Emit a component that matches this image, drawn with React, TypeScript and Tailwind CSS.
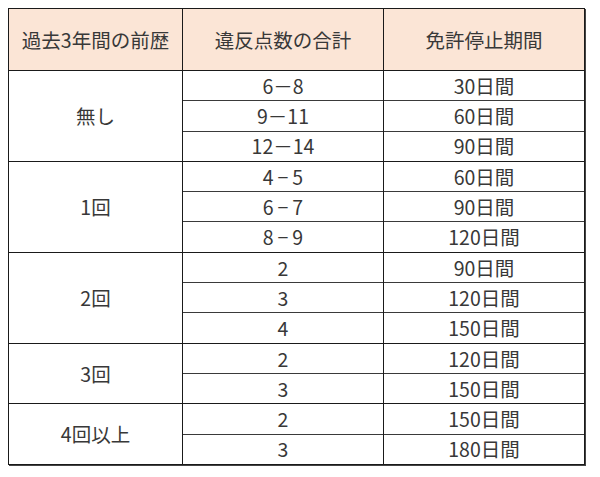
const groups: { label: string; rows: [string, string][] }[] = [
  { label: "無し", rows: [["6－8", "30日間"], ["9－11", "60日間"], ["12－14", "90日間"]] },
  { label: "1回", rows: [["4\u2009−\u20095", "60日間"], ["6\u2009−\u20097", "90日間"], ["8\u2009−\u20099", "120日間"]] },
  { label: "2回", rows: [["2", "90日間"], ["3", "120日間"], ["4", "150日間"]] },
  { label: "3回", rows: [["2", "120日間"], ["3", "150日間"]] },
  { label: "4回以上", rows: [["2", "150日間"], ["3", "180日間"]] },
];

export default function App() {
  return (
    <div
      className="w-[600px] h-[477px] bg-white pt-2 pl-2 text-[#383838] text-[19.5px]"
      style={{ fontFamily: "'Noto Sans CJK JP', 'Noto Sans', sans-serif" }}
    >
      <table className="w-[576px] border-collapse table-fixed shadow-[1px_1px_0_#444]">
        <colgroup>
          <col className="w-[174px]" />
          <col className="w-[201px]" />
          <col className="w-[201px]" />
        </colgroup>
        <thead>
          <tr className="h-[62px] bg-[#fbe5d6]">
            <th className="border border-[#1a1a1a] font-normal text-center">過去3年間の前歴</th>
            <th className="border border-[#1a1a1a] font-normal text-center">違反点数の合計</th>
            <th className="border border-[#1a1a1a] font-normal text-center">免許停止期間</th>
          </tr>
        </thead>
        <tbody>
          {groups.map((g) =>
            g.rows.map(([pts, days], i) => (
              <tr key={g.label + i} className="h-[30.3px] leading-none">
                {i === 0 && (
                  <td rowSpan={g.rows.length} className="border border-[#1a1a1a] text-center align-middle">
                    {g.label}
                  </td>
                )}
                <td
                  className={`border-x border-x-[#1a1a1a] text-center p-0 ${
                    i === 0 ? "border-t border-t-[#1a1a1a]" : "border-t border-t-[#3a3a3a]"
                  } ${i === g.rows.length - 1 ? "border-b border-b-[#1a1a1a]" : ""}`}
                >
                  {pts}
                </td>
                <td
                  className={`border-x border-x-[#1a1a1a] text-center p-0 ${
                    i === 0 ? "border-t border-t-[#1a1a1a]" : "border-t border-t-[#3a3a3a]"
                  } ${i === g.rows.length - 1 ? "border-b border-b-[#1a1a1a]" : ""}`}
                >
                  {days}
                </td>
              </tr>
            ))
          )}
        </tbody>
      </table>
    </div>
  );
}
